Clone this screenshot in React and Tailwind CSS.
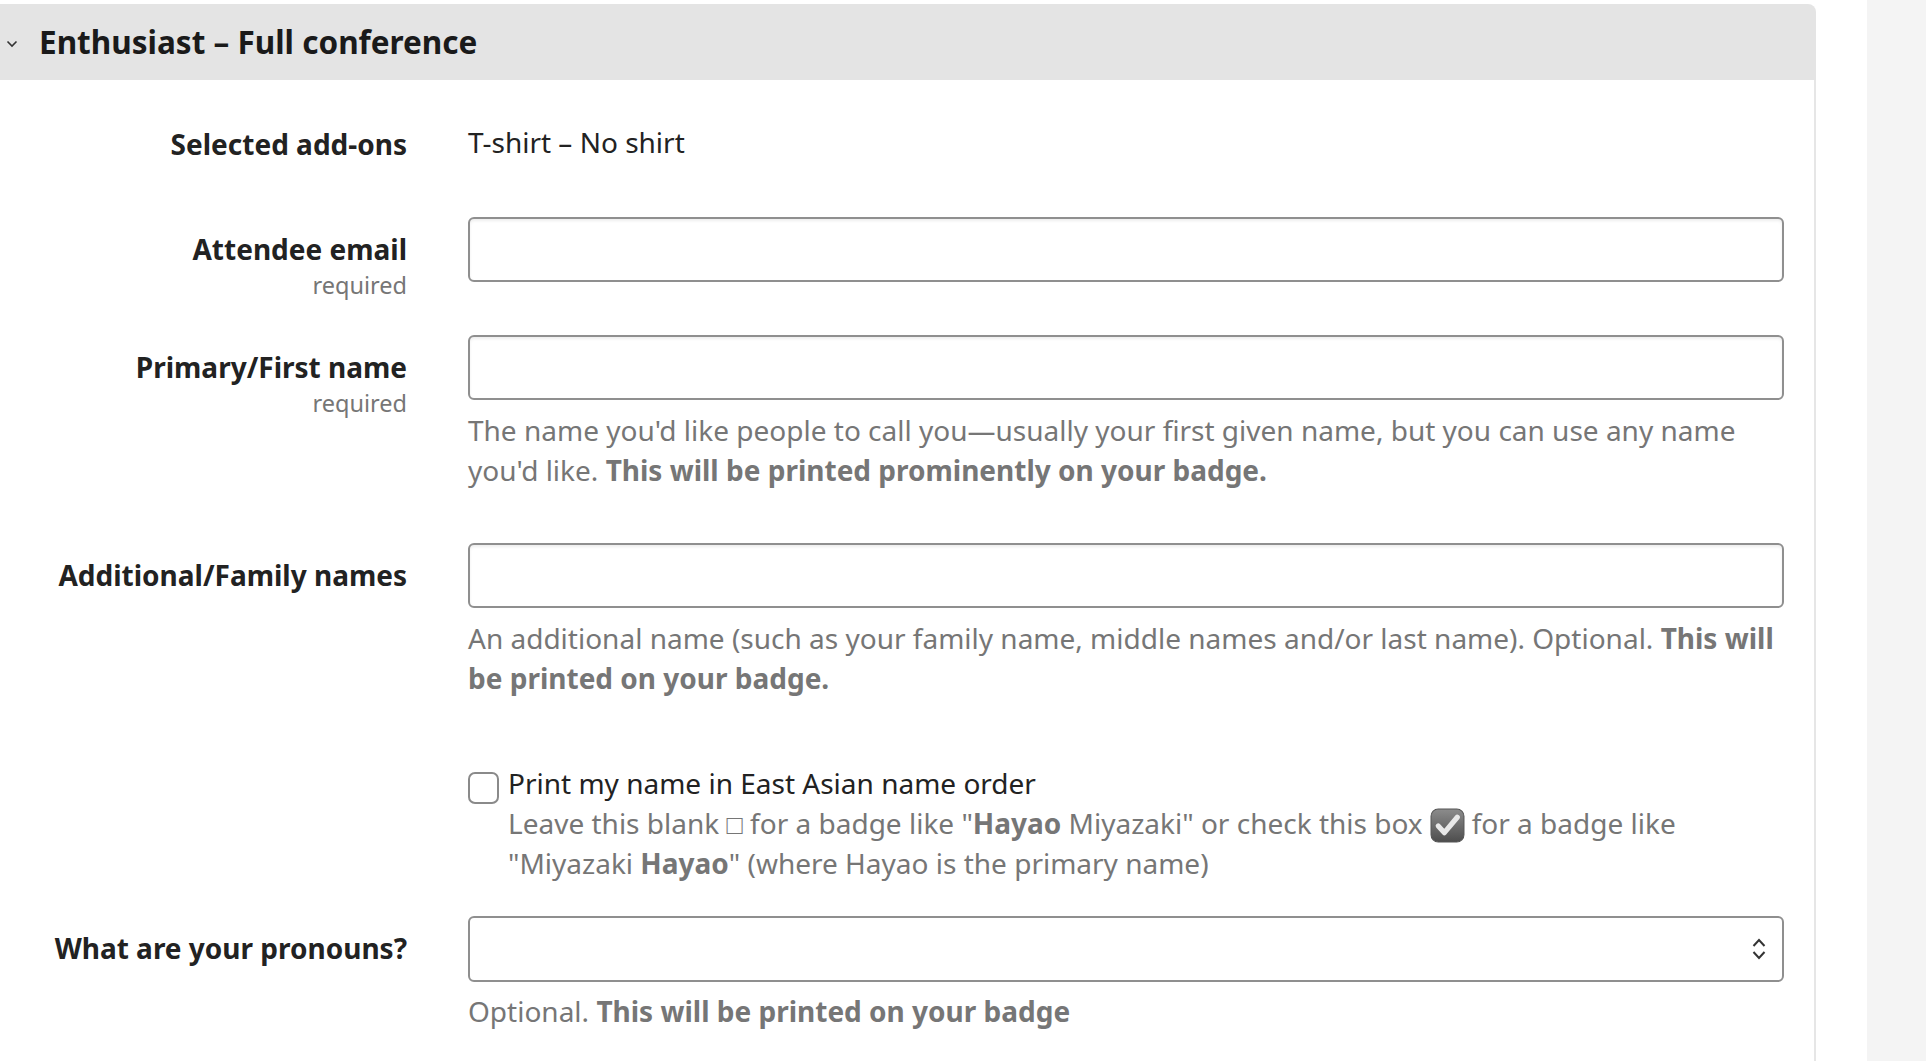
import React from "react";

const font = { fontFamily: '"Noto Sans", "Open Sans", sans-serif' };

const Label = ({ children, required }) => (
  <div className="flex flex-col items-end pt-[12px] text-right">
    <span className="text-[28px] leading-[40px] font-bold text-[#222]">
      {children}
    </span>
    {required && (
      <span className="text-[23.5px] leading-[33px] text-[#767676]">
        required
      </span>
    )}
  </div>
);

const TextInput = () => (
  <input
    type="text"
    className="block w-full h-[65px] px-4 border-2 border-[#8f8f8f] rounded-[6px] bg-white shadow-[inset_0_2px_3px_rgba(0,0,0,0.07)] outline-none text-[28px]"
  />
);

const Help = ({ children }) => (
  <p className="mt-[10px] text-[28px] leading-[40px] text-[#767676]">
    {children}
  </p>
);

const CheckedIcon = () => (
  <svg
    width="35"
    height="35"
    viewBox="0 0 34 34"
    className="inline-block align-[-3px] -my-[6px] mx-[7px]"
  >
    <defs>
      <linearGradient id="cb" x1="0" y1="0" x2="0" y2="1">
        <stop offset="0" stopColor="#8c8c8c" />
        <stop offset="1" stopColor="#4d4d4d" />
      </linearGradient>
    </defs>
    <rect x="1" y="1" width="32" height="32" rx="7" fill="url(#cb)" stroke="#555" strokeWidth="1" />
    <path
      d="M8 17.5 L14 24 L26.5 9"
      fill="none"
      stroke="#e8e8e8"
      strokeWidth="5"
      strokeLinecap="round"
      strokeLinejoin="round"
    />
  </svg>
);

export default function App() {
  return (
    <div className="min-h-screen flex bg-white" style={font}>
      <div className="w-[1816px] shrink-0 flex flex-col">
        {/* Ticket header */}
        <div className="mt-[4px] h-[76px] bg-[#e4e4e4] rounded-tr-[8px] flex items-center">
          <svg width="12" height="8" viewBox="0 0 12 8" className="ml-[6px] mt-[4px]">
            <path d="M1.5 1.5 L6 6 L10.5 1.5" fill="none" stroke="#333" strokeWidth="1.6" />
          </svg>
          <h2 className="ml-[21px] text-[31.5px] leading-[46px] font-bold text-[#1a1a1a]">
            Enthusiast – Full conference
          </h2>
        </div>

        <div className="flex-1 border-r-2 border-[#e6e6e6] pr-[30px]">
          <div className="grid grid-cols-[407px_1fr] gap-x-[61px]">
            {/* Selected add-ons */}
            <div className="mt-[42px] text-right text-[28px] leading-[40px] font-bold text-[#222] pt-[2px]">
              Selected add-ons
            </div>
            <div className="mt-[42px] text-[28px] leading-[40px] text-[#222]">
              T-shirt – No shirt
            </div>

            {/* Attendee email */}
            <div className="mt-[53px]">
              <Label required>Attendee email</Label>
            </div>
            <div className="mt-[53px]">
              <TextInput />
            </div>

            {/* First name */}
            <div className="mt-[33px]">
              <Label required>Primary/First name</Label>
            </div>
            <div className="mt-[33px]">
              <TextInput />
              <Help>
                The name you'd like people to call you—usually your first given
                name, but you can use any name you'd like.{" "}
                <strong className="font-bold">
                  This will be printed prominently on your badge.
                </strong>
              </Help>
            </div>

            {/* Family names */}
            <div className="mt-[53px]">
              <Label>Additional/Family names</Label>
            </div>
            <div className="mt-[53px]">
              <TextInput />
              <Help>
                An additional name (such as your family name, middle names
                and/or last name). Optional.{" "}
                <strong className="font-bold">
                  This will be printed on your badge.
                </strong>
              </Help>
            </div>

            {/* East Asian order */}
            <div />
            <div className="mt-[65px] flex items-start gap-[9px]">
              <input
                type="checkbox"
                className="appearance-none shrink-0 mt-[9px] w-[31px] h-[32px] border-2 border-[#8a8a8a] rounded-[7px] bg-white"
              />
              <div className="text-[28px] leading-[40px]">
                <div className="text-[#222]">Print my name in East Asian name order</div>
                <div className="text-[#767676]">
                  Leave this blank <span className="text-[27px] leading-[20px]">□</span> for a
                  badge like "<strong className="font-bold">Hayao</strong>{" "}
                  Miyazaki" or check this box
                  <CheckedIcon />
                  for a badge like "Miyazaki{" "}
                  <strong className="font-bold">Hayao</strong>" (where Hayao is
                  the primary name)
                </div>
              </div>
            </div>

            {/* Pronouns */}
            <div className="mt-[33px]">
              <Label>What are your pronouns?</Label>
            </div>
            <div className="mt-[33px]">
              <div className="relative">
                <select className="appearance-none block w-full h-[66px] px-4 border-2 border-[#8f8f8f] rounded-[6px] bg-white outline-none text-[28px]">
                  <option></option>
                </select>
                <svg
                  width="16"
                  height="28"
                  viewBox="0 0 16 28"
                  className="absolute right-[17px] top-[19px] pointer-events-none"
                >
                  <path d="M2.5 11 L8 5 L13.5 11" fill="none" stroke="#333" strokeWidth="2" />
                  <path d="M2.5 17 L8 23 L13.5 17" fill="none" stroke="#333" strokeWidth="2" />
                </svg>
              </div>
              <p className="mt-[9px] text-[28px] leading-[40px] text-[#767676]">
                Optional.{" "}
                <strong className="font-bold">This will be printed on your badge</strong>
              </p>
            </div>
          </div>
        </div>
      </div>
      <div className="w-[51px] shrink-0" />
      <div className="flex-1 bg-[#f4f4f4]" />
    </div>
  );
}
